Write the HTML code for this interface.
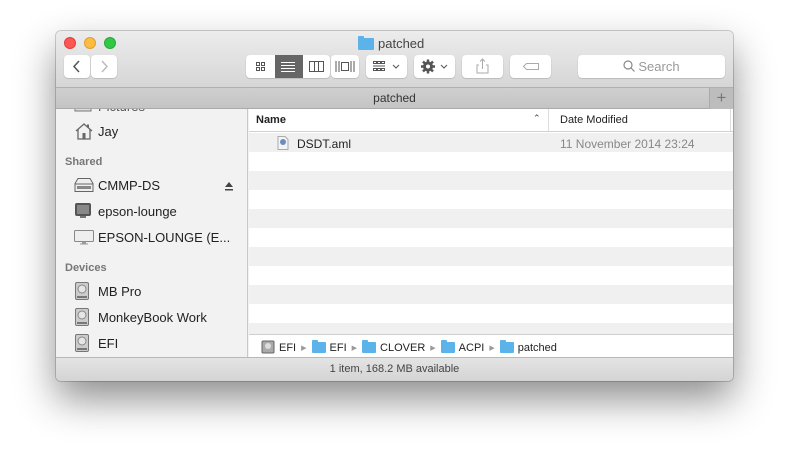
<!DOCTYPE html>
<html><head><meta charset="utf-8"><style>
*{margin:0;padding:0;box-sizing:border-box}
body{width:789px;height:461px;background:#fff;font-family:"Liberation Sans",sans-serif;position:relative;overflow:hidden}
.win{position:absolute;left:56px;top:31px;width:677px;height:350px;border-radius:5px;overflow:hidden;box-shadow:0 18px 40px rgba(0,0,0,.45),0 0 0 1px rgba(0,0,0,.18);background:#f2f2f2}
.tb{position:absolute;left:0;top:0;width:677px;height:56px;background:linear-gradient(#ececec,#d6d6d6)}
.dot{position:absolute;top:6px;width:12px;height:12px;border-radius:50%}
.btn{position:absolute;top:24px;height:23px;background:#fff;border-radius:4px;box-shadow:0 0.5px 1px rgba(0,0,0,.25)}
.abs{position:absolute}
.tabbar{position:absolute;left:0;top:56px;width:677px;height:22px;background:linear-gradient(#cfcfcf,#c4c4c4);border-top:1px solid #b0b0b0;border-bottom:1px solid #aaa;font-size:12px;color:#333;text-align:center;line-height:21px;z-index:2}
.side{position:absolute;left:0;top:78px;width:192px;height:248px;background:#f2f2f2;font-size:13px;color:#222;border-right:1px solid #c8c8c8;overflow:hidden}
.si{position:absolute;left:42px}
.sh{position:absolute;left:9px;font-size:11px;color:#777;font-weight:bold}
.ic{position:absolute;left:18px}
.content{position:absolute;left:193px;top:78px;width:484px;height:248px;background:#fff}
.hdr{position:absolute;left:0;top:0;width:484px;height:23px;border-bottom:1px solid #d0d0d0;font-size:11px;color:#222;background:#fff}
.row{position:absolute;left:0;width:484px;height:19px}
.g{background:#f0f0f0}
.path{position:absolute;left:193px;top:303px;width:484px;height:23px;background:#fff;border-top:1px solid #cfcfcf;font-size:11px;color:#222}
.status{position:absolute;left:0;top:326px;width:677px;height:24px;background:linear-gradient(#e4e4e4,#d4d4d4);border-top:1px solid #b8b8b8;font-size:11px;color:#444;text-align:center;line-height:22px}
.fold{display:inline-block;width:14px;height:11px;background:#5bb3ea;border-radius:1px;vertical-align:-2px;position:relative;margin-right:4px}
.fold:before{content:"";position:absolute;left:0;top:-2px;width:6px;height:3px;background:#5bb3ea;border-radius:1px 1px 0 0}
.arr{color:#999;font-size:7px;margin:0 5px;vertical-align:1px}
</style></head><body>
<div class="win">
<div class="tb">
 <div class="dot" style="left:8px;background:#fc5753;border:0.5px solid #df3e3b"></div>
 <div class="dot" style="left:28px;background:#fdbc40;border:0.5px solid #de9f34"></div>
 <div class="dot" style="left:48px;background:#33c748;border:0.5px solid #27aa35"></div>
 <div class="abs" style="left:302px;top:5px;font-size:13px;color:#444"><span class="fold" style="width:16px;height:12px"></span>patched</div>
 <div class="btn" style="left:8px;width:26px"><svg width="26" height="23"><path d="M15 6 L10 11.5 L15 17" stroke="#555" stroke-width="1.5" fill="none"/></svg></div>
 <div class="btn" style="left:35px;width:26px"><svg width="26" height="23"><path d="M11 6 L16 11.5 L11 17" stroke="#bbb" stroke-width="1.5" fill="none"/></svg></div>
 <div class="btn" style="left:190px;width:84px;overflow:hidden">
  <svg width="84" height="23">
   <g fill="none" stroke="#555"><rect x="10.5" y="7.5" width="3" height="3"/><rect x="15.5" y="7.5" width="3" height="3"/><rect x="10.5" y="12.5" width="3" height="3"/><rect x="15.5" y="12.5" width="3" height="3"/></g>
   <rect x="29" y="0" width="28" height="23" fill="#666"/>
   <g stroke="#fff"><path d="M35 7.5h14M35 10.5h14M35 13.5h14M35 16.5h14"/></g>
   <rect x="63.5" y="6.5" width="14" height="10" fill="none" stroke="#555"/><path d="M68.5 7v9M72.5 7v9" stroke="#555"/>
  </svg>
 </div>
 <div class="btn" style="left:275px;width:28px;left:275px"><svg width="28" height="23"><g fill="none" stroke="#555"><path d="M5 6v11M23 6v11M8 6v11M20 6v11"/><rect x="10.5" y="7.5" width="7" height="8"/></g></svg></div>
 <div class="btn" style="left:310px;width:41px"><svg width="41" height="23"><g fill="none" stroke="#555"><rect x="7.5" y="6.5" width="3" height="2"/><rect x="11.5" y="6.5" width="3" height="2"/><rect x="15.5" y="6.5" width="3" height="2"/><path d="M7 11h12"/><rect x="7.5" y="13.5" width="3" height="2"/><rect x="11.5" y="13.5" width="3" height="2"/><rect x="15.5" y="13.5" width="3" height="2"/><path d="M27 10l3 3 3-3"/></g></svg></div>
 <div class="btn" style="left:358px;width:41px"><svg width="41" height="23"><g transform="translate(14 11.5)"><circle r="5" fill="#555"/><g stroke="#555" stroke-width="2.5"><path d="M0-7v14M-7 0h14M-5-5l10 10M5-5l-10 10"/></g><circle r="2" fill="#fff"/></g><path d="M27 10l3 3 3-3" stroke="#555" fill="none"/></svg></div>
 <div class="btn" style="left:406px;width:41px"><svg width="41" height="23"><g fill="none" stroke="#aaa"><path d="M17 10h-2v8h11v-8h-2M20.5 14V4M18 6.5l2.5-2.5 2.5 2.5"/></g></svg></div>
 <div class="btn" style="left:454px;width:41px"><svg width="41" height="23"><path d="M16.5 8.5h12v6h-12l-3-3z" fill="none" stroke="#aaa"/></svg></div>
 <div class="btn" style="left:522px;width:147px;font-size:13px;color:#999;line-height:23px;text-align:center"><svg width="12" height="12" style="vertical-align:-1px;margin-right:3px"><circle cx="5" cy="5" r="4" fill="none" stroke="#888" stroke-width="1.2"/><path d="M8 8l3.5 3.5" stroke="#888" stroke-width="1.2"/></svg>Search</div>
</div>
<div class="tabbar">patched<div class="abs" style="right:0;top:0;width:24px;height:21px;border-left:1px solid #aaa;background:#bdbdbd;color:#777;font-size:17px;line-height:19px">+</div></div>
<div class="side">
 <div class="ic" style="top:-11px"><svg width="18" height="14"><rect x="1" y="1" width="16" height="12" fill="#ddd" stroke="#777"/></svg></div>
 <div class="si" style="top:-10px;color:#555">Pictures</div>
 <div class="ic" style="top:12px"><svg width="20" height="20"><path d="M2 10L10 3l8 7M4 8.5V18h12V8.5" fill="none" stroke="#666" stroke-width="1.3"/><rect x="8.5" y="12" width="3" height="6" fill="#666"/><rect x="13" y="3.5" width="2" height="3" fill="#666"/></svg></div>
 <div class="si" style="top:15px">Jay</div>
 <div class="sh" style="top:47px">Shared</div>
 <div class="ic" style="top:68px"><svg width="20" height="16"><path d="M4 1.5h12l3 5v8H1v-8z" fill="#eee" stroke="#666"/><path d="M1 7h18" stroke="#666"/><rect x="3" y="9" width="14" height="3" fill="#888"/></svg></div>
 <div class="si" style="top:69px">CMMP-DS</div>
 <div class="abs" style="left:168px;top:70px"><svg width="10" height="10"><path d="M1 6L5 1l4 5z M1 8h8v1.5H1z" fill="#444"/></svg></div>
 <div class="ic" style="top:93px"><svg width="18" height="18"><rect x="1" y="1" width="16" height="13" rx="2" fill="#555"/><rect x="3" y="3" width="12" height="9" fill="#888"/><rect x="6" y="14" width="6" height="2" fill="#777"/></svg></div>
 <div class="si" style="top:95px">epson-lounge</div>
 <div class="ic" style="top:120px"><svg width="20" height="16"><rect x="0.5" y="1.5" width="19" height="11" rx="1" fill="#eee" stroke="#888"/><rect x="8" y="12.5" width="4" height="2" fill="#999"/><rect x="6" y="14.5" width="8" height="1" fill="#999"/></svg></div>
 <div class="si" style="top:121px">EPSON-LOUNGE (E...</div>
 <div class="sh" style="top:153px">Devices</div>
 <div class="ic" style="top:172px"><svg width="16" height="20"><rect x="1.5" y="1.5" width="13" height="17" rx="1.5" fill="#ccc" stroke="#777"/><circle cx="8" cy="8" r="4" fill="#e5e5e5" stroke="#888"/><rect x="3" y="15" width="10" height="2" fill="#777"/></svg></div>
 <div class="si" style="top:175px">MB Pro</div>
 <div class="ic" style="top:198px"><svg width="16" height="20"><rect x="1.5" y="1.5" width="13" height="17" rx="1.5" fill="#ccc" stroke="#777"/><circle cx="8" cy="8" r="4" fill="#e5e5e5" stroke="#888"/><rect x="3" y="15" width="10" height="2" fill="#777"/></svg></div>
 <div class="si" style="top:201px">MonkeyBook Work</div>
 <div class="ic" style="top:224px"><svg width="16" height="20"><rect x="1.5" y="1.5" width="13" height="17" rx="1.5" fill="#ccc" stroke="#777"/><circle cx="8" cy="8" r="4" fill="#e5e5e5" stroke="#888"/><rect x="3" y="15" width="10" height="2" fill="#777"/></svg></div>
 <div class="si" style="top:227px">EFI</div>
</div>
<div class="content">
 <div class="row g" style="top:24px"></div>
 <div class="row g" style="top:62px"></div>
 <div class="row g" style="top:100px"></div>
 <div class="row g" style="top:138px"></div>
 <div class="row g" style="top:176px"></div>
 <div class="row g" style="top:214px"></div>
 <div class="hdr">
  <div class="abs" style="left:7px;top:5px;font-weight:bold">Name</div>
  <div class="abs" style="left:284px;top:4px;font-size:9px;color:#444">&#8963;</div>
  <div class="abs" style="left:299px;top:0;height:22px;border-left:1px solid #ddd"></div>
  <div class="abs" style="left:311px;top:5px">Date Modified</div>
  <div class="abs" style="left:481px;top:0;height:22px;border-left:1px solid #ddd"></div>
 </div>
 <div class="abs" style="left:28px;top:27px"><svg width="12" height="14"><path d="M1 0.5h7l3 3v10H1z" fill="#f4f4f4" stroke="#aaa"/><circle cx="6" cy="6" r="3" fill="#6a8cc0"/></svg></div>
 <div class="abs" style="left:48px;top:28px;font-size:12px;color:#222">DSDT.aml</div>
 <div class="abs" style="left:311px;top:28px;font-size:12px;color:#888">11 November 2014 23:24</div>
</div>
<div class="path"><div class="abs" style="left:12px;top:5px;white-space:nowrap"><svg width="14" height="14" style="vertical-align:-3px;margin-right:4px"><rect x="1" y="1" width="12" height="12" rx="1" fill="#aaa" stroke="#666"/><circle cx="7" cy="6" r="3" fill="#ddd"/></svg>EFI<span class="arr">&#9654;</span><span class="fold"></span>EFI<span class="arr">&#9654;</span><span class="fold"></span>CLOVER<span class="arr">&#9654;</span><span class="fold"></span>ACPI<span class="arr">&#9654;</span><span class="fold"></span>patched</div></div>
<div class="status">1 item, 168.2 MB available</div>
</div>
</body></html>
